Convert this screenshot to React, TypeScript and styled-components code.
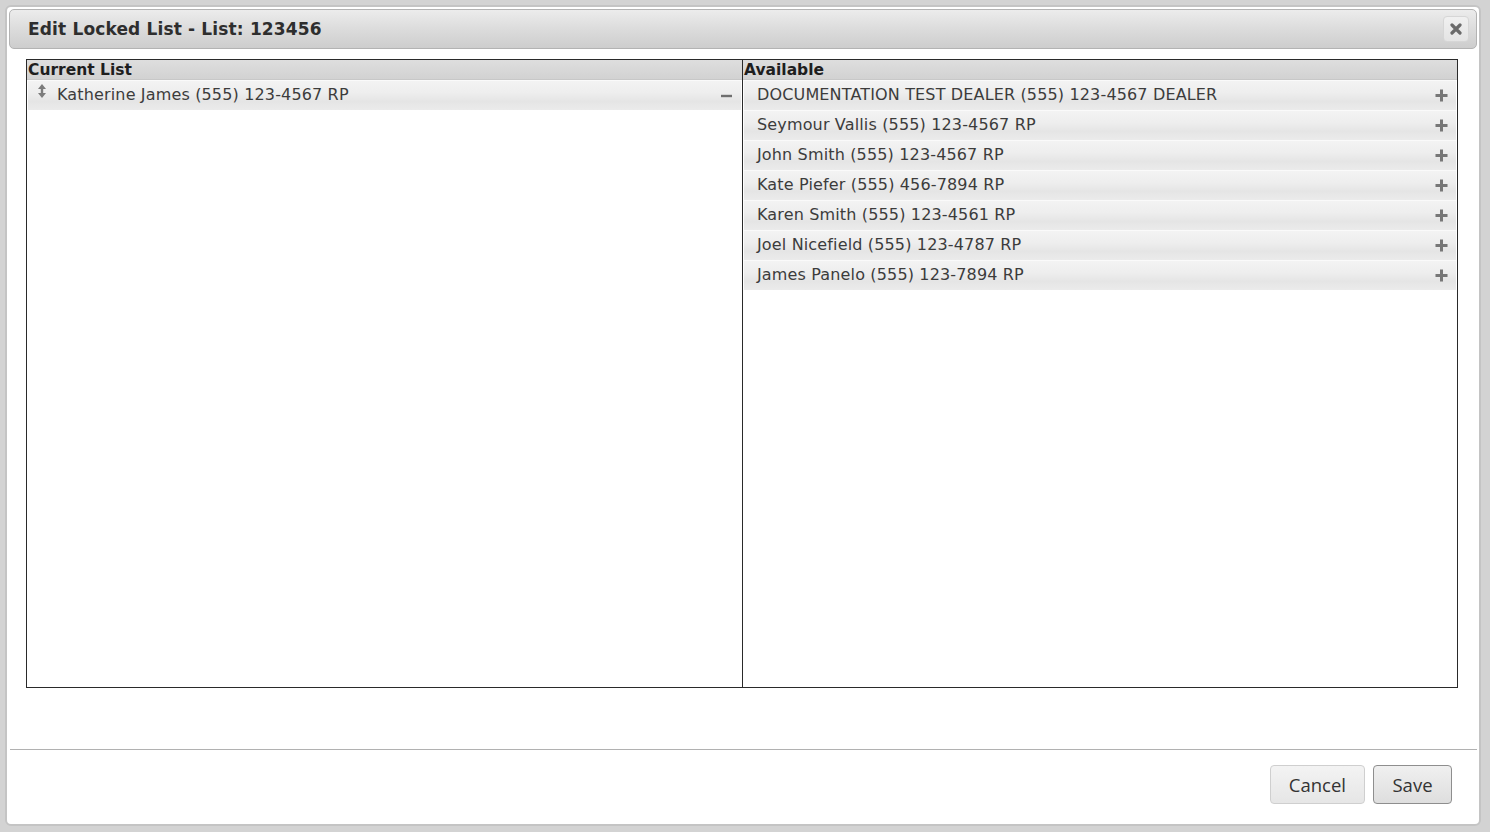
import React from "react";
import styled, { createGlobalStyle } from "styled-components";

const GlobalStyle = createGlobalStyle`
  html, body {
    margin: 0;
    padding: 0;
    background: #d3d3d3;
  }
  body {
    font-family: "DejaVu Sans", Verdana, sans-serif;
  }
`;

const Page = styled.div`
  width: 1490px;
  height: 832px;
  box-sizing: border-box;
  padding: 5px 9px 6px 5px;
  overflow: hidden;
`;

const Dialog = styled.div`
  box-sizing: border-box;
  height: 821px;
  border: 2px solid #c4c4c4;
  border-radius: 6px;
  background: #fff;
  padding: 2px;
  display: flex;
  flex-direction: column;
`;

const TitleBar = styled.div`
  height: 40px;
  box-sizing: border-box;
  border: 1px solid #b3b3b3;
  border-radius: 5px;
  background: linear-gradient(to bottom, #ececec 0%, #dcdcdc 50%, #cdcdcd 100%);
  display: flex;
  align-items: center;
  justify-content: space-between;
  padding: 0 7px 0 18px;
`;

const Title = styled.h1`
  margin: 0;
  font-size: 17px;
  font-weight: bold;
  color: #2e2e2e;
  letter-spacing: 0.15px;
`;

const CloseButton = styled.button`
  width: 26px;
  height: 26px;
  padding: 0;
  border: 1px solid #d6d6d6;
  border-radius: 4px;
  background: linear-gradient(to bottom, #f0f0f0, #e4e4e4);
  display: flex;
  align-items: center;
  justify-content: center;
`;

const Body = styled.div`
  flex: 1;
  padding: 10px 19px 0 17px;
`;

const Lists = styled.div`
  height: 629px;
  box-sizing: border-box;
  border: 1px solid #2a2a2a;
  display: grid;
  grid-template-columns: 715px 1fr;
`;

const Column = styled.div<{ $divider?: boolean }>`
  display: flex;
  flex-direction: column;
  border-left: ${(p) => (p.$divider ? "1px solid #2a2a2a" : "none")};
  min-width: 0;
`;

const ColumnHeader = styled.div`
  height: 20px;
  box-sizing: border-box;
  background: linear-gradient(to bottom, #dedede 0%, #d2d2d2 100%);
  border-bottom: 1px solid #c8c8c8;
  font-size: 15.5px;
  font-weight: bold;
  color: #1e1e1e;
  line-height: 20px;
  padding-left: 1px;
`;

const Row = styled.div<{ $handle?: boolean }>`
  height: 30px;
  box-sizing: border-box;
  margin: 0 1px;
  border-top: 1px solid #fafafa;
  background: linear-gradient(
    to bottom,
    #f3f3f3 0%,
    #eeeeee 40%,
    #e5e5e5 70%,
    #ebebeb 100%
  );
  display: flex;
  align-items: center;
  font-size: 16px;
  letter-spacing: 0.15px;
  color: #3c3c3c;
  padding: 0 8px 0 ${(p) => (p.$handle ? 9 : 13)}px;
`;

const RowLabel = styled.span`
  flex: 1;
  white-space: nowrap;
  position: relative;
  top: -1px;
`;

const Handle = styled.span`
  width: 10px;
  display: flex;
  justify-content: center;
  margin-right: 10px;
  position: relative;
  top: -5px;
`;

const Separator = styled.div`
  height: 1px;
  background: #b1b1b1;
  margin: 0 0 0 1px;
`;

const Footer = styled.div`
  height: 72px;
  display: flex;
  align-items: flex-start;
  justify-content: flex-end;
  gap: 8px;
  padding: 15px 25px 0 0;
  box-sizing: border-box;
`;

const Button = styled.button<{ $primary?: boolean }>`
  height: 39px;
  box-sizing: border-box;
  padding: 0 18px;
  min-width: ${(p) => (p.$primary ? 79 : 95)}px;
  border-radius: 4px;
  border: 1px solid ${(p) => (p.$primary ? "#8e8e8e" : "#cfcfcf")};
  background: ${(p) =>
    p.$primary
      ? "linear-gradient(to bottom, #f0f0f0, #dedede)"
      : "linear-gradient(to bottom, #f3f3f3, #e6e6e6)"};
  font-family: "Open Sans", "DejaVu Sans", sans-serif;
  font-size: 18.5px;
  color: #333;
`;

const CloseIcon = () => (
  <svg width="12" height="12" viewBox="0 0 12 12">
    <path d="M2 2 L10 10 M10 2 L2 10" stroke="#6a6a6a" strokeWidth="3.2" strokeLinecap="round" />
  </svg>
);

const PlusIcon = () => (
  <svg width="13" height="13" viewBox="0 0 13 13">
    <path d="M6.5 0.5 V12.5 M0.5 6.5 H12.5" stroke="#777" strokeWidth="3" />
  </svg>
);

const MinusIcon = () => (
  <svg width="13" height="13" viewBox="0 0 13 13">
    <path d="M1 7 H12" stroke="#6f6f6f" strokeWidth="2.4" />
  </svg>
);

const DragIcon = () => (
  <svg width="8" height="14" viewBox="0 0 8 14">
    <path d="M4 0 L8 5 H5.2 V9 H8 L4 14 L0 9 H2.8 V5 H0 Z" fill="#7c7c7c" />
  </svg>
);

const current = ["Katherine James (555) 123-4567 RP"];

const available = [
  "DOCUMENTATION TEST DEALER (555) 123-4567 DEALER",
  "Seymour Vallis (555) 123-4567 RP",
  "John Smith (555) 123-4567 RP",
  "Kate Piefer (555) 456-7894 RP",
  "Karen Smith (555) 123-4561 RP",
  "Joel Nicefield (555) 123-4787 RP",
  "James Panelo (555) 123-7894 RP",
];

export default function App() {
  return (
    <>
      <GlobalStyle />
      <Page>
        <Dialog>
          <TitleBar>
            <Title>Edit Locked List - List: 123456</Title>
            <CloseButton aria-label="Close">
              <CloseIcon />
            </CloseButton>
          </TitleBar>
          <Body>
            <Lists>
              <Column>
                <ColumnHeader>Current List</ColumnHeader>
                {current.map((name) => (
                  <Row key={name} $handle>
                    <Handle>
                      <DragIcon />
                    </Handle>
                    <RowLabel>{name}</RowLabel>
                    <MinusIcon />
                  </Row>
                ))}
              </Column>
              <Column $divider>
                <ColumnHeader>Available</ColumnHeader>
                {available.map((name) => (
                  <Row key={name}>
                    <RowLabel>{name}</RowLabel>
                    <PlusIcon />
                  </Row>
                ))}
              </Column>
            </Lists>
          </Body>
          <Separator />
          <Footer>
            <Button>Cancel</Button>
            <Button $primary>Save</Button>
          </Footer>
        </Dialog>
      </Page>
    </>
  );
}
